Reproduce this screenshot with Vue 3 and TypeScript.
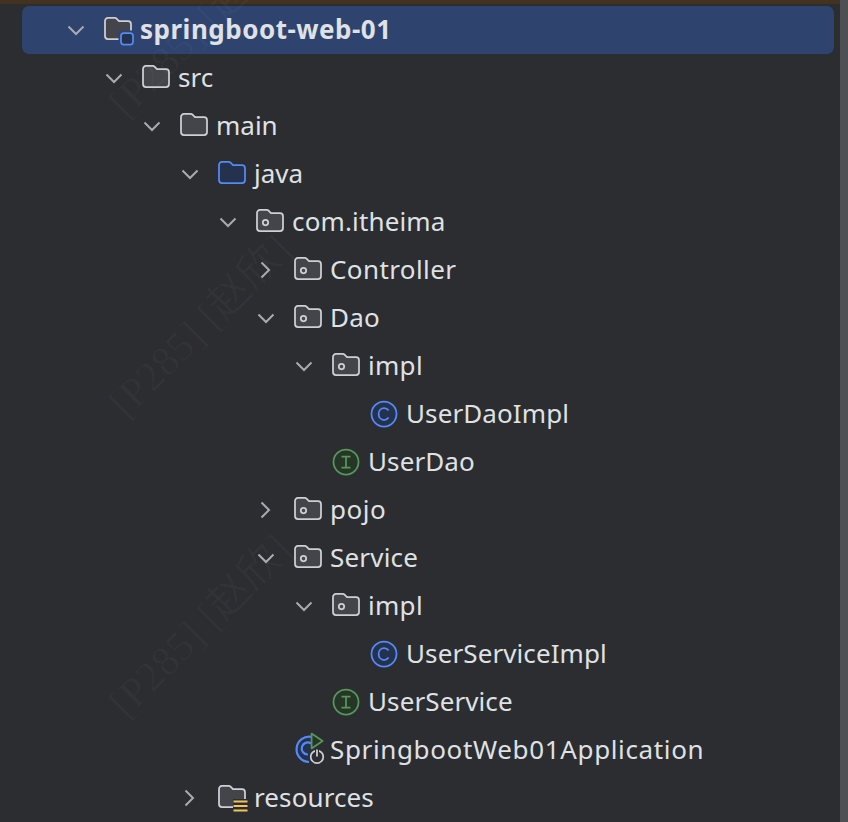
<script setup lang="ts">
type Icon = 'module' | 'folder' | 'source' | 'package' | 'class' | 'interface' | 'app' | 'resources'
interface Row {
  label: string
  depth: number
  icon: Icon
  open?: boolean
  leaf?: boolean
  bold?: boolean
  track?: number
}
const rows: Row[] = [
  { label: 'springboot-web-01', depth: 0, icon: 'module', open: true, bold: true, track: 0.5 },
  { label: 'src', depth: 1, icon: 'folder', open: true },
  { label: 'main', depth: 2, icon: 'folder', open: true },
  { label: 'java', depth: 3, icon: 'source', open: true },
  { label: 'com.itheima', depth: 4, icon: 'package', open: true, track: 0.15 },
  { label: 'Controller', depth: 5, icon: 'package', track: 0.4 },
  { label: 'Dao', depth: 5, icon: 'package', open: true, track: 0.2 },
  { label: 'impl', depth: 6, icon: 'package', open: true, track: 0.3 },
  { label: 'UserDaoImpl', depth: 7, icon: 'class', leaf: true, track: 0.1 },
  { label: 'UserDao', depth: 6, icon: 'interface', leaf: true, track: 0.1 },
  { label: 'pojo', depth: 5, icon: 'package', track: 0.5 },
  { label: 'Service', depth: 5, icon: 'package', open: true, track: 0.2 },
  { label: 'impl', depth: 6, icon: 'package', open: true, track: 0.3 },
  { label: 'UserServiceImpl', depth: 7, icon: 'class', leaf: true, track: 0.1 },
  { label: 'UserService', depth: 6, icon: 'interface', leaf: true, track: 0.1 },
  { label: 'SpringbootWeb01Application', depth: 5, icon: 'app', leaf: true, track: 0.64 },
  { label: 'resources', depth: 3, icon: 'resources', track: 0.1 },
]
const folderPath = 'M4 1.9H10.6C11.5 1.9 12.2 2.3 12.8 2.9L15 5.2H24C25.7 5.2 27 6.5 27 8.2V20C27 21.7 25.7 23 24 23H4C2.3 23 1 21.7 1 20V4.9C1 3.2 2.3 1.9 4 1.9Z'
const marks = [0, 1, 2]
</script>

<template>
  <div class="screen">
    <div class="topband"></div>
    <div class="scrollbar"></div>
    <ul class="tree">
      <li
        v-for="(row, i) in rows"
        :key="i"
        class="row"
        :class="{ selected: i === 0 }"
        :style="{ paddingLeft: row.depth * 38 + 104 - 22 + 'px' }"
      >
        <svg v-if="!row.leaf" class="chevron" viewBox="0 0 28 28" fill="none">
          <path v-if="row.open" d="M6.5 10.5L14 18L21.5 10.5" />
          <path v-else d="M9.5 6.5L17 14L9.5 21.5" />
        </svg>
        <svg class="icon" viewBox="0 0 28 28" fill="none">
          <template v-if="row.icon === 'module'">
            <path class="f-gray" :d="folderPath" />
            <rect x="14.5" y="14.5" width="16" height="16" fill="#2e436e" />
            <rect x="17" y="17" width="12" height="11.5" rx="2.8" fill="#25324d" stroke="#548af7" stroke-width="1.75" />
          </template>
          <path v-else-if="row.icon === 'folder'" class="f-gray" :d="folderPath" />
          <path v-else-if="row.icon === 'source'" class="f-blue" :d="folderPath" />
          <template v-else-if="row.icon === 'package'">
            <path class="f-gray" :d="folderPath" />
            <circle cx="9.5" cy="14.6" r="2.7" stroke="#ced0d6" stroke-width="1.75" />
          </template>
          <template v-else-if="row.icon === 'class'">
            <circle cx="14" cy="14" r="12.5" fill="#25324d" stroke="#548af7" stroke-width="1.75" />
            <path d="M18.6 10.4C17.6 8.9 16 8 14.1 8C10.9 8 8.6 10.6 8.6 14C8.6 17.4 10.9 20 14.1 20C16 20 17.6 19.1 18.6 17.6" stroke="#548af7" stroke-width="1.75" />
          </template>
          <template v-else-if="row.icon === 'interface'">
            <circle cx="14" cy="14" r="12.5" fill="#253627" stroke="#57965c" stroke-width="1.75" />
            <path d="M9.5 8.5H18.5M14 8.5V19.5M9.5 19.5H18.5" stroke="#57965c" stroke-width="1.75" />
          </template>
          <template v-else-if="row.icon === 'app'">
            <path d="M17.5 0.8A12.7 12.7 0 1 0 15 26" fill="#25324d" stroke="#548af7" stroke-width="2.2" />
            <path d="M17 7.5A6 6 0 1 0 14 18.5" stroke="#548af7" stroke-width="2.2" />
            <path d="M17.6 -2.4L28.6 5L17.6 12.4Z" fill="#253627" stroke="#57965c" stroke-width="1.75" stroke-linejoin="round" />
            <circle cx="23" cy="20.8" r="6.3" fill="#2b2d30" stroke="#ced0d6" stroke-width="1.75" />
            <path d="M23 12.5V19.8" stroke="#2b2d30" stroke-width="4" />
            <path d="M23 13.5V20.5" stroke="#ced0d6" stroke-width="1.75" />
          </template>
          <template v-else>
            <path class="f-gray" :d="folderPath" />
            <rect x="15" y="15" width="15" height="14" fill="#2b2d30" />
            <path d="M15.5 17.5H29.5M15.5 22H29.5M15.5 26.5H29.5" stroke="#f2c55c" stroke-width="2" />
          </template>
        </svg>
        <span
          class="label"
          :class="{ bold: row.bold }"
          :style="row.track ? { letterSpacing: row.track + 'px' } : undefined"
        >{{ row.label }}</span>
      </li>
    </ul>
    <div v-for="m in marks" :key="m" class="mark" :class="'mark' + m">[P285] [赵欣]</div>
  </div>
</template>

<style>
html, body { margin: 0; background: #2b2d30; }
</style>

<style scoped>
.screen {
  position: relative;
  width: 848px;
  height: 822px;
  overflow: hidden;
  background: #2b2d30;
  font-family: "Noto Sans", "Noto Sans CJK SC", sans-serif;
}
.topband {
  height: 4px;
  background: #43321f;
}
.scrollbar {
  position: absolute;
  top: 0;
  right: 0;
  bottom: 0;
  width: 8px;
  background: #4f5053;
}
.mark {
  position: absolute;
  left: 50px;
  width: 300px;
  text-align: center;
  font-family: "Liberation Serif", "Noto Sans CJK SC", serif;
  font-size: 42px;
  line-height: 48px;
  white-space: nowrap;
  color: rgba(255, 255, 255, 0.03);
  transform: rotate(-45deg);
  pointer-events: none;
}
.mark0 { top: 2px; }
.mark1 { top: 302px; }
.mark2 { top: 602px; }
.tree {
  position: relative;
  list-style: none;
  margin: 2px 14px 0 22px;
  padding: 0;
}
.row {
  position: relative;
  display: flex;
  align-items: center;
  gap: 8px;
  height: 48px;
  box-sizing: border-box;
  border-radius: 7px;
}
.row.selected { background: #2e436e; }
.chevron {
  position: absolute;
  width: 28px;
  height: 28px;
  margin-left: -42px;
  stroke: #a8abb0;
  stroke-width: 2;
}
.icon {
  flex: none;
  width: 28px;
  height: 28px;
  overflow: visible;
}
.f-gray { fill: #43454a; stroke: #ced0d6; stroke-width: 1.75; }
.f-blue { fill: #25324d; stroke: #548af7; stroke-width: 1.75; }
.label {
  margin-top: -2px;
  font-size: 26px;
  color: #dfe1e5;
  white-space: nowrap;
}
.bold { font-weight: 700; }
</style>
